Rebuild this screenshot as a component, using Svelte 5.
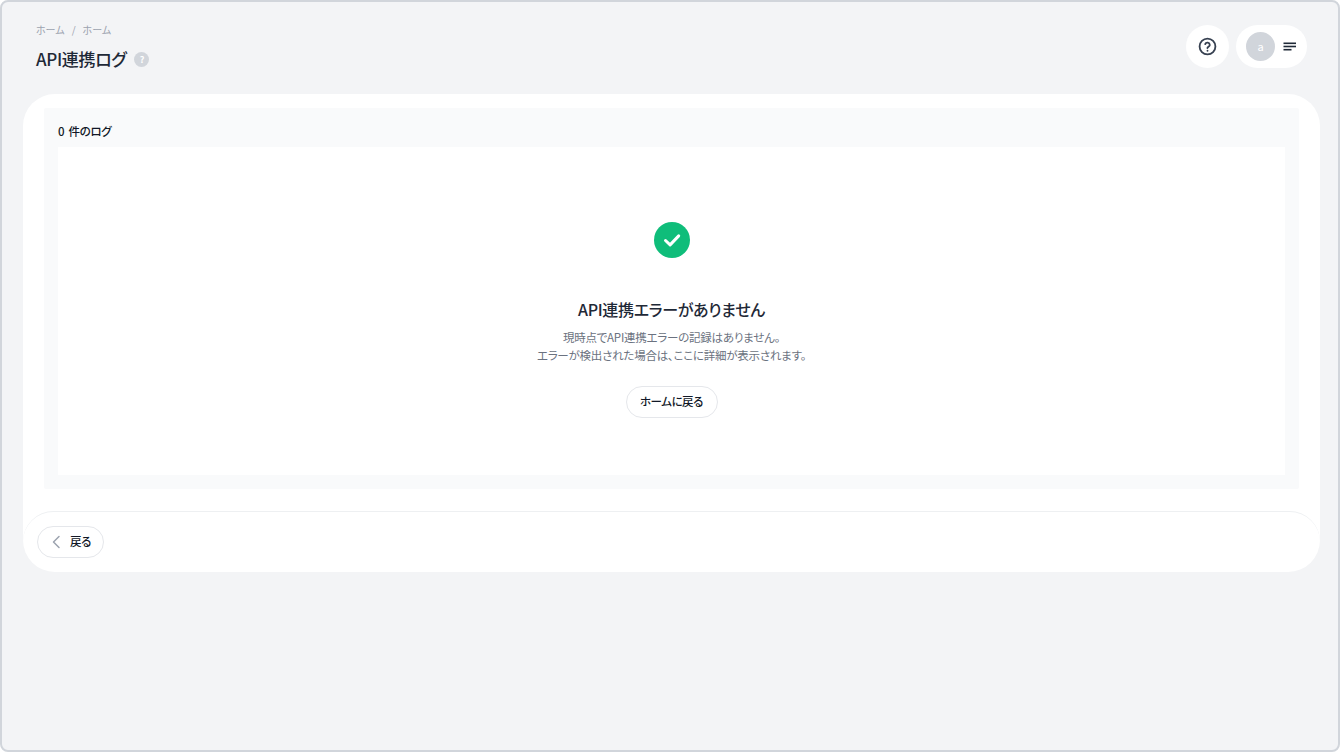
<script>
	let logCount = 0;
</script>

<div class="frame">
	<header class="page-header">
		<div>
			<nav class="crumbs">
				<span>ホーム</span>
				<span class="sep">/</span>
				<span>ホーム</span>
			</nav>
			<div class="title-row">
				<h1>API連携ログ</h1>
				<span class="hint">?</span>
			</div>
		</div>
		<div class="header-actions">
			<button class="help-btn" aria-label="ヘルプ">
				<svg width="19" height="19" viewBox="0 0 24 24" fill="none" stroke="#374151" stroke-width="2.3" stroke-linecap="round" stroke-linejoin="round">
					<circle cx="12" cy="12" r="10" />
					<path d="M9.1 9a3 3 0 0 1 5.8 1c0 2-3 2.6-3 4" />
					<path d="M12 17.4h.01" />
				</svg>
			</button>
			<button class="user-btn" aria-label="メニュー">
				<span class="avatar">a</span>
				<svg width="14" height="10" viewBox="0 0 14 10" fill="#1f2937">
					<rect x="0.5" y="0.5" width="12.5" height="1.6" />
					<rect x="0.5" y="3.7" width="12.5" height="1.6" />
					<rect x="0.5" y="6.9" width="8" height="1.6" />
				</svg>
			</button>
		</div>
	</header>

	<main class="card">
		<section class="log-panel">
			<h2>{logCount} 件のログ</h2>
			<div class="empty">
				<svg class="ok-icon" width="36" height="36" viewBox="0 0 36 36">
					<circle cx="18" cy="18" r="18" fill="#0fbd7a" />
					<path d="M11.5 18.5l4.6 4.4 8.6-9" fill="none" stroke="#fff" stroke-width="3" stroke-linecap="round" stroke-linejoin="round" />
				</svg>
				<h3>API連携エラーがありません</h3>
				<p>現時点でAPI連携エラーの記録はありません。<br />エラーが検出された場合は、ここに詳細が表示されます。</p>
				<button class="pill home-btn"><span>ホームに戻る</span></button>
			</div>
		</section>
		<footer class="card-footer">
			<button class="pill back-btn">
				<svg width="10" height="14" viewBox="0 0 10 14" fill="none" stroke="#9ca3af" stroke-width="1.5" stroke-linecap="round" stroke-linejoin="round">
					<path d="M8 1.5L2.5 7 8 12.5" />
				</svg>
				<span>戻る</span>
			</button>
		</footer>
	</main>
</div>

<style>
	:global(body) {
		margin: 0;
		background: #fff;
		font-family: "Noto Sans CJK JP", "Noto Sans", sans-serif;
		font-feature-settings: "palt";
	}

	.frame {
		box-sizing: border-box;
		height: 752px;
		background: #f3f4f6;
		border: 2px solid #d1d5db;
		border-radius: 8px;
		padding: 0 18px 0 21px;
	}

	button {
		font-family: inherit;
		font-feature-settings: inherit;
		cursor: pointer;
	}

	.page-header {
		display: flex;
		justify-content: space-between;
		align-items: flex-start;
		height: 92px;
		padding: 0 13px 0 13px;
	}

	.crumbs {
		display: flex;
		gap: 7px;
		margin-top: 20px;
		font-size: 10px;
		line-height: 16px;
		color: #9ca3af;
	}

	.title-row {
		display: flex;
		align-items: center;
		gap: 8px;
		margin-top: 8px;
	}

	h1 {
		margin: 0;
		font-size: 17px;
		line-height: 26px;
		font-weight: 500;
		letter-spacing: -0.02em;
		color: #1f2937;
	}

	.hint {
		width: 15px;
		height: 15px;
		border-radius: 50%;
		background: #d1d5db;
		color: #fff;
		font-size: 9px;
		font-weight: 700;
		line-height: 15px;
		text-align: center;
	}

	.header-actions {
		display: flex;
		gap: 7px;
		margin-top: 23px;
	}

	.help-btn,
	.user-btn {
		height: 43px;
		border: none;
		background: #fff;
		border-radius: 22px;
		display: flex;
		align-items: center;
		justify-content: center;
		padding: 0;
	}

	.help-btn {
		width: 43px;
	}

	.user-btn {
		width: 71px;
		gap: 8px;
		justify-content: flex-start;
		padding-left: 10px;
	}

	.avatar {
		width: 29px;
		height: 29px;
		border-radius: 50%;
		background: #d1d5db;
		color: #fff;
		font-size: 11px;
		line-height: 29px;
		text-align: center;
	}

	.card {
		background: #fff;
		border-radius: 32px;
		height: 478px;
		box-sizing: border-box;
		padding-top: 14px;
		display: flex;
		flex-direction: column;
	}

	.log-panel {
		margin: 0 21px;
		background: #f9fafb;
		border-radius: 2px;
		padding: 14px 14px 14px;
		height: 381px;
		box-sizing: border-box;
		display: flex;
		flex-direction: column;
	}

	h2 {
		margin: 0 0 7px;
		font-size: 11.5px;
		line-height: 18px;
		font-weight: 500;
		letter-spacing: -0.03em;
		word-spacing: 2px;
		color: #111827;
	}

	.empty {
		flex: 1;
		background: #fff;
		display: flex;
		flex-direction: column;
		align-items: center;
		padding-top: 75px;
	}

	h3 {
		margin: 38px 0 0;
		font-size: 16px;
		line-height: 26px;
		font-weight: 500;
		letter-spacing: -0.02em;
		color: #1f2937;
	}

	p {
		margin: 6px 0 0;
		font-size: 11.5px;
		line-height: 18px;
		letter-spacing: -0.02em;
		color: #6b7280;
		text-align: center;
	}

	.pill {
		background: #fff;
		border: 1px solid #e5e7eb;
		border-radius: 16px;
		height: 32px;
		font-size: 11.5px;
		font-weight: 500;
		letter-spacing: -0.04em;
		color: #111827;
		display: flex;
		align-items: center;
	}

	.pill span {
		margin-bottom: 2px;
	}

	.home-btn {
		margin-top: 22px;
		width: 92px;
		justify-content: center;
		padding: 0;
	}

	.card-footer {
		margin-top: 22px;
		flex: 1;
		border-top: 1px solid #eef0f2;
		border-radius: 32px;
		display: flex;
		align-items: flex-start;
		padding: 14px 14px;
	}

	.back-btn {
		width: 67px;
		gap: 9px;
		padding: 0 0 0 13px;
	}
</style>
